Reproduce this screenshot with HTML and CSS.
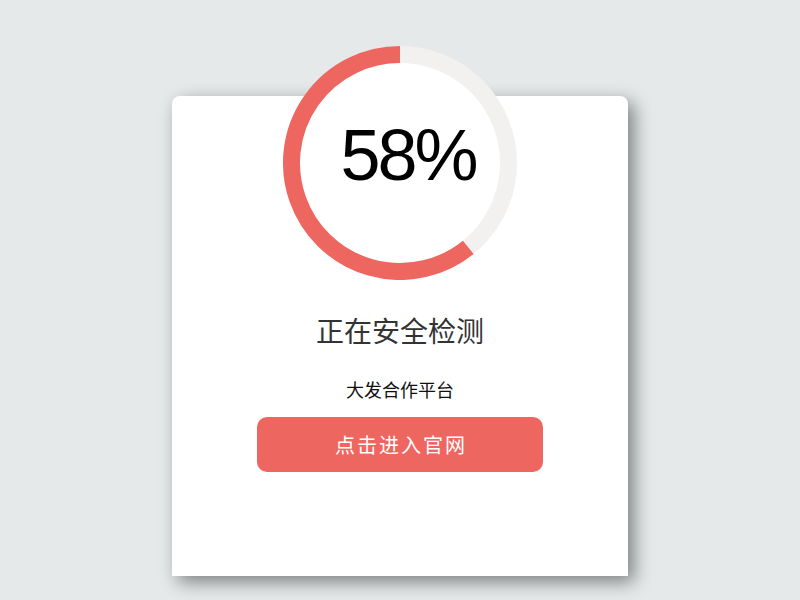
FILE: index.html
```html
<!DOCTYPE html>
<html lang="zh-CN">
<head>
<meta charset="utf-8">
<title>正在安全检测</title>
<link rel="stylesheet" href="styles.css">
</head>
<body>
<main class="card">
  <div class="gauge">
    <svg class="ring" width="234" height="234" viewBox="0 0 234 234">
      <circle cx="117" cy="117" r="108.5" fill="#ffffff" stroke="#f2f1f0" stroke-width="17"/>
      <path d="M117 8.5 A108.5 108.5 0 1 0 185.28 201.32" fill="none" stroke="#ee6660" stroke-width="17"/>
    </svg>
    <div class="percent">58%</div>
  </div>
  <h1 class="title">正在安全检测</h1>
  <p class="subtitle">大发合作平台</p>
  <a class="btn" href="#">点击进入官网</a>
</main>
</body>
</html>
```
FILE: styles.css
```css
html, body {
  margin: 0;
  padding: 0;
}
body {
  background: #e5e9ea;
  height: 600px;
  overflow: hidden;
  font-family: "Noto Sans CJK SC", "Noto Sans", sans-serif;
}
.card {
  width: 456px;
  height: 480px;
  margin: 96px auto 0;
  background: #ffffff;
  border-radius: 8px 8px 0 0;
  box-shadow: 6px 6px 18px rgba(0, 0, 0, 0.45);
  display: flex;
  flex-direction: column;
  align-items: center;
}
.gauge {
  margin-top: -50px;
  width: 234px;
  height: 234px;
  display: grid;
}
.ring, .percent {
  grid-area: 1 / 1;
}
.ring {
  display: block;
}
.percent {
  align-self: center;
  justify-self: center;
  font-family: "Liberation Sans", Arial, sans-serif;
  font-size: 72px;
  line-height: 1;
  color: #000;
  padding: 0 0 16px 16px;
  letter-spacing: -3px;
}
.title {
  margin: 30px 0 0;
  font-size: 28px;
  line-height: 40px;
  font-weight: 400;
  color: #333333;
}
.subtitle {
  margin: 26px 0 0;
  font-size: 18px;
  line-height: 26px;
  color: #111111;
}
.btn {
  margin-top: 15px;
  width: 286px;
  height: 55px;
  border-radius: 10px;
  background: #ee6660;
  color: #ffffff;
  text-decoration: none;
  font-size: 20px;
  letter-spacing: 2px;
  display: flex;
  align-items: center;
  justify-content: center;
  padding-left: 2px;
  box-sizing: border-box;
}
```
